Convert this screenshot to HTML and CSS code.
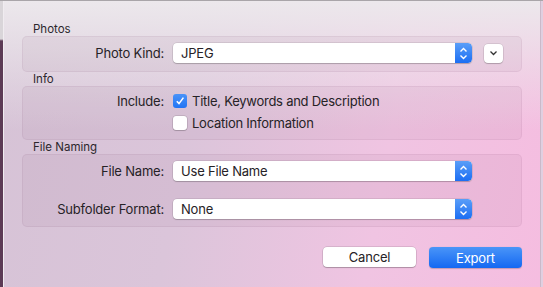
FILE: index.html
```html
<!DOCTYPE html>
<html lang="en">
<head>
	<meta charset="UTF-8">
	<meta name="viewport" content="width=device-width, initial-scale=1.0">
	<title>Export Photos</title>
	<link rel="stylesheet" href="styles.css">
</head>
<body>
	<div class="desktop">
		<div class="behind"></div>
		<div class="sheet">
			<div class="group-title">Photos</div>
			<div class="group">
				<div class="row">
					<label class="row-label">Photo Kind:</label>
					<div class="popup"><span>JPEG</span><span class="stepper"><svg width="9" height="13" viewBox="0 0 9 13"><path d="M1.5 4.5 L4.5 1.5 L7.5 4.5 M1.5 8.5 L4.5 11.5 L7.5 8.5" fill="none" stroke="#fff" stroke-width="1.4"/></svg></span></div>
					<button class="disclose"><svg width="9" height="6" viewBox="0 0 9 6"><path d="M1.5 1.5 L4.5 4.5 L7.5 1.5" fill="none" stroke="#333" stroke-width="1.3"/></svg></button>
				</div>
			</div>

			<div class="group-title">Info</div>
			<div class="group group-info">
				<div class="check-row">
					<label class="row-label">Include:</label>
					<span class="checkbox checked"><svg width="10" height="10" viewBox="0 0 10 10"><path d="M1.8 5.2 L4 7.6 L8.4 1.6" fill="none" stroke="#fff" stroke-width="1.6"/></svg></span>
					<span class="check-text">Title, Keywords and Description</span>
				</div>
				<div class="check-row">
					<label class="row-label"></label>
					<span class="checkbox"></span>
					<span class="check-text">Location Information</span>
				</div>
			</div>

			<div class="group-title">File Naming</div>
			<div class="group group-naming">
				<div class="row">
					<label class="row-label">File Name:</label>
					<div class="popup"><span>Use File Name</span><span class="stepper"><svg width="9" height="13" viewBox="0 0 9 13"><path d="M1.5 4.5 L4.5 1.5 L7.5 4.5 M1.5 8.5 L4.5 11.5 L7.5 8.5" fill="none" stroke="#fff" stroke-width="1.4"/></svg></span></div>
				</div>
				<div class="row">
					<label class="row-label">Subfolder Format:</label>
					<div class="popup"><span>None</span><span class="stepper"><svg width="9" height="13" viewBox="0 0 9 13"><path d="M1.5 4.5 L4.5 1.5 L7.5 4.5 M1.5 8.5 L4.5 11.5 L7.5 8.5" fill="none" stroke="#fff" stroke-width="1.4"/></svg></span></div>
				</div>
			</div>

			<div class="buttons">
				<button class="btn">Cancel</button>
				<button class="btn btn-default">Export</button>
			</div>
		</div>
	</div>
</body>
</html>
```

FILE: styles.css
```css
body {
	margin: 0;
	padding: 0;
	font-family: Inter, "Liberation Sans", sans-serif;
	color: #262226;
	background-color: #e0cfe0;
}

.desktop {
	display: flex;
	width: 543px;
	height: 287px;
	overflow: hidden;
	border-top: 1px solid #a9a5a9;
	box-sizing: border-box;
}

.behind {
	width: 3px;
	background: linear-gradient(180deg, #d9d5d9 0, #d9d5d9 38px, #5c3a55 40px, #5c3a55 100%);
}

.sheet {
	flex: 1;
	padding: 21px 18px 0 18px;
	border-left: 1px solid #f0ecf0;
	border-right: 1px solid #cbb9c9;
	background:
		linear-gradient(180deg, #ece8ec 0%, rgba(236, 232, 236, 0) 45%),
		linear-gradient(100deg, #d6c3d6 0%, #dbc5da 35%, #f0c4e2 70%, #f5bde0 100%);
	margin-right: 2px;
}

.group-title {
	font-size: 11.5px;
	line-height: 14px;
	padding-left: 11px;
	color: #2c272c;
}

.group {
	background-color: rgba(110, 60, 100, 0.055);
	border: 1px solid rgba(110, 60, 100, 0.07);
	border-radius: 5px;
	padding: 6px 0 8px 0;
	display: flex;
	flex-direction: column;
}

.group-info {
	padding: 3px 0 5px 0;
}

.group-naming {
	padding: 6px 0 7px 0;
	gap: 18px;
}

.row {
	display: flex;
	align-items: center;
	height: 20px;
}

.row-label {
	width: 141px;
	margin-right: 9px;
	text-align: right;
	font-size: 13px;
	letter-spacing: -0.2px;
}

.popup {
	width: 299px;
	height: 20px;
	box-sizing: border-box;
	background-color: #fff;
	border-radius: 4px;
	box-shadow: 0 0 0 0.5px rgba(0, 0, 0, 0.15), 0 1px 1px rgba(0, 0, 0, 0.18);
	display: flex;
	align-items: center;
	justify-content: space-between;
	font-size: 13px;
	letter-spacing: -0.2px;
	padding-left: 8px;
	overflow: hidden;
}

.stepper {
	width: 17px;
	height: 20px;
	background: linear-gradient(180deg, #5a9ef8, #1c6ef3);
	display: flex;
	align-items: center;
	justify-content: center;
	border-radius: 0 4px 4px 0;
}

.disclose {
	width: 19px;
	height: 19px;
	margin-left: 12px;
	padding: 0;
	border: none;
	border-radius: 4px;
	background-color: #fff;
	box-shadow: 0 0 0 0.5px rgba(0, 0, 0, 0.15), 0 1px 1px rgba(0, 0, 0, 0.18);
	display: flex;
	align-items: center;
	justify-content: center;
}

.check-row {
	display: flex;
	align-items: center;
	height: 22px;
}

.checkbox {
	width: 14px;
	height: 14px;
	box-sizing: border-box;
	border-radius: 3px;
	background-color: #fff;
	box-shadow: 0 0 0 0.5px rgba(0, 0, 0, 0.2), 0 1px 1px rgba(0, 0, 0, 0.15);
	display: flex;
	align-items: center;
	justify-content: center;
}

.checkbox.checked {
	background: linear-gradient(180deg, #4a93f8, #2174f4);
	box-shadow: none;
}

.check-text {
	font-size: 13px;
	letter-spacing: -0.25px;
	margin-left: 5px;
}

.buttons {
	display: flex;
	justify-content: flex-end;
	gap: 13px;
	margin-top: 20px;
}

.btn {
	width: 93px;
	height: 20px;
	padding: 0;
	border: none;
	border-radius: 4px;
	background-color: #fff;
	box-shadow: 0 0 0 0.5px rgba(0, 0, 0, 0.18), 0 1px 1px rgba(0, 0, 0, 0.2);
	font-family: Inter, "Liberation Sans", sans-serif;
	font-size: 13px;
	letter-spacing: -0.2px;
	color: #262226;
}

.btn-default {
	height: 21px;
	color: #fff;
	background: linear-gradient(180deg, #4a95f8, #1468f2);
	box-shadow: 0 0.5px 1px rgba(0, 0, 0, 0.2);
}
```
